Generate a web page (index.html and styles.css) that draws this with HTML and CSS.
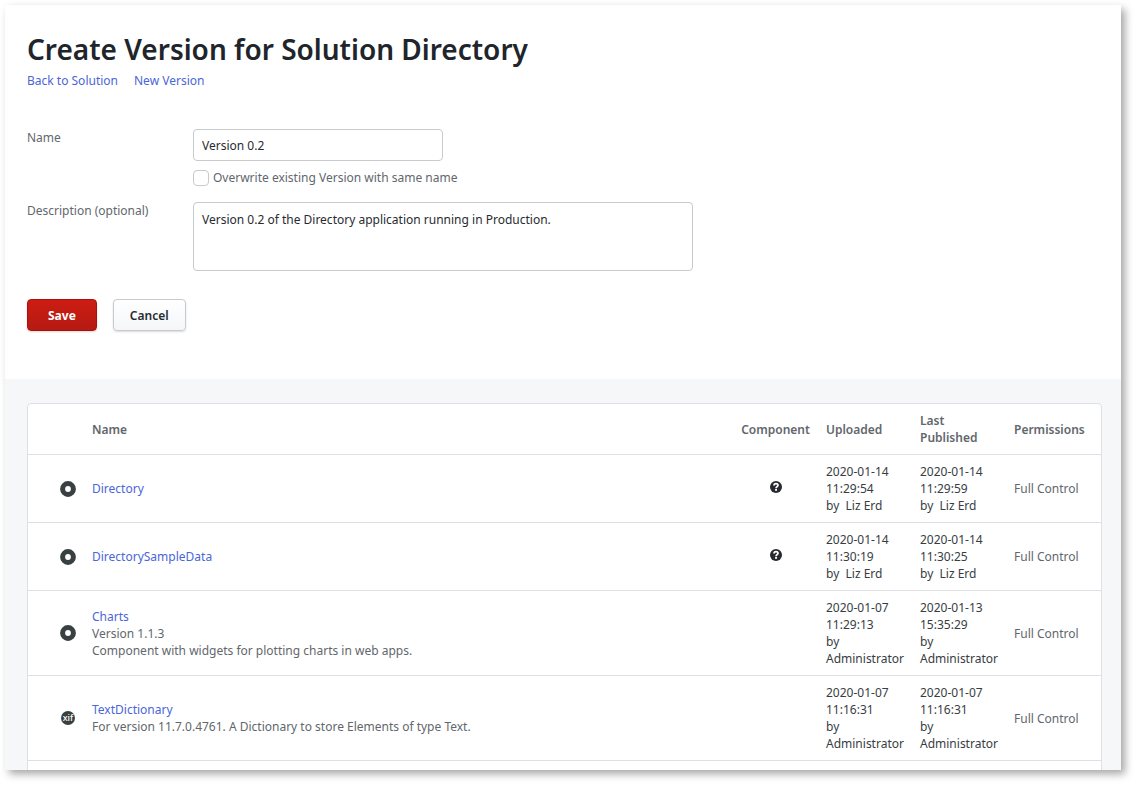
FILE: index.html
```
<!DOCTYPE html>
<html lang="en">
<head>
<meta charset="utf-8">
<title>Create Version for Solution Directory</title>
<link rel="stylesheet" href="styles.css">
</head>
<body>
<svg class="sprite" aria-hidden="true">
  <symbol id="icon-module" viewBox="0 0 16 16">
    <circle cx="8" cy="8" r="5.4" fill="none" stroke="#384042" stroke-width="5"/>
  </symbol>
  <symbol id="icon-help" viewBox="0 0 12 12">
    <circle cx="6" cy="6" r="6" fill="#272b30"/>
    <path d="M4 4.6C4 1.9 8 2 8 4.3C8 5.7 6.1 5.6 6.1 7.2" fill="none" stroke="#fff" stroke-width="1.8"/>
    <rect x="5.1" y="8" width="1.9" height="1.8" fill="#fff"/>
  </symbol>
</svg>
<main class="window">
  <section class="editor">
    <h1 class="title">Create Version for Solution Directory</h1>
    <nav class="links">
      <a href="#">Back to Solution</a>
      <a href="#">New Version</a>
    </nav>
    <form class="form">
      <div class="field">
        <label class="field-label" for="name">Name</label>
        <div class="field-body">
          <input class="text-input" id="name" type="text" value="Version 0.2">
          <div class="check">
            <input class="checkbox" id="overwrite" type="checkbox">
            <label for="overwrite">Overwrite existing Version with same name</label>
          </div>
        </div>
      </div>
      <div class="field">
        <label class="field-label" for="description">Description (optional)</label>
        <div class="field-body">
          <textarea class="text-area" id="description">Version 0.2 of the Directory application running in Production.</textarea>
        </div>
      </div>
      <div class="actions">
        <button class="button primary" type="button">Save</button>
        <button class="button" type="button">Cancel</button>
      </div>
    </form>
  </section>
  <section class="listing">
    <table class="modules">
      <thead>
        <tr>
          <th class="col-icon"></th>
          <th>Name</th>
          <th class="col-component">Component</th>
          <th class="col-date">Uploaded</th>
          <th class="col-date">Last Published</th>
          <th class="col-permissions">Permissions</th>
        </tr>
      </thead>
      <tbody>
        <tr>
          <td class="col-icon"><svg class="module-icon"><use href="#icon-module"/></svg></td>
          <td><a href="#">Directory</a></td>
          <td class="col-component"><svg class="help-icon"><use href="#icon-help"/></svg></td>
          <td class="date">2020-01-14 11:29:54<br>by &nbsp;Liz Erd</td>
          <td class="date">2020-01-14 11:29:59<br>by &nbsp;Liz Erd</td>
          <td>Full Control</td>
        </tr>
        <tr>
          <td class="col-icon"><svg class="module-icon"><use href="#icon-module"/></svg></td>
          <td><a href="#">DirectorySampleData</a></td>
          <td class="col-component"><svg class="help-icon"><use href="#icon-help"/></svg></td>
          <td class="date">2020-01-14 11:30:19<br>by &nbsp;Liz Erd</td>
          <td class="date">2020-01-14 11:30:25<br>by &nbsp;Liz Erd</td>
          <td>Full Control</td>
        </tr>
        <tr>
          <td class="col-icon"><svg class="module-icon"><use href="#icon-module"/></svg></td>
          <td><a href="#">Charts</a><br>Version 1.1.3<br>Component with widgets for plotting charts in web apps.</td>
          <td></td>
          <td class="date">2020-01-07 11:29:13<br>by Administrator</td>
          <td class="date">2020-01-13 15:35:29<br>by Administrator</td>
          <td>Full Control</td>
        </tr>
        <tr>
          <td class="col-icon"><span class="xif-icon">xif</span></td>
          <td><a href="#">TextDictionary</a><br>For version 11.7.0.4761. A Dictionary to store Elements of type Text.</td>
          <td></td>
          <td class="date">2020-01-07 11:16:31<br>by Administrator</td>
          <td class="date">2020-01-07 11:16:31<br>by Administrator</td>
          <td>Full Control</td>
        </tr>
        <tr class="next-row"><td></td><td></td><td></td><td></td><td></td><td></td></tr>
      </tbody>
    </table>
  </section>
</main>
</body>
</html>
```
FILE: styles.css
```
* { box-sizing: border-box; }

body {
  margin: 0;
  height: 100vh;
  padding: 5px 15px 15px 5px;
  background: #fff;
  color: #62676c;
  font: 12px/17px "Noto Sans", "Open Sans", sans-serif;
  overflow: hidden;
}

a { color: #4a66d8; text-decoration: none; }

.sprite { display: none; }

.window {
  display: flex;
  flex-direction: column;
  height: 100%;
  overflow: hidden;
  background: #fff;
  box-shadow: 4px 4px 8px rgba(0, 0, 0, 0.35);
}

.editor { flex: none; padding: 25px 22px 48px; }

.title {
  margin: 0;
  color: #20252b;
  font-size: 28px;
  line-height: 38px;
  font-weight: 600;
}

.links { display: flex; gap: 16px; margin-top: 4px; }

.form {
  display: flex;
  flex-direction: column;
  gap: 16px;
  margin-top: 40px;
}

.field { display: flex; }
.field-label { flex: none; width: 166px; }
.field-body { flex: 1; }

.text-input,
.text-area {
  display: block;
  padding: 8px;
  border: 1px solid #c9cacd;
  border-radius: 4px;
  background: #fff;
  color: #272b30;
  font: inherit;
}

.text-input { width: 250px; height: 32px; }
.text-area { width: 500px; max-width: 100%; height: 69px; resize: none; }

.check { display: flex; align-items: center; gap: 4px; margin-top: 8px; }

.checkbox {
  appearance: none;
  width: 16px;
  height: 16px;
  margin: 0;
  border: 1px solid #c9cacd;
  border-radius: 4px;
  background: #fff;
}

.actions { display: flex; gap: 16px; margin-top: 12px; }

.button {
  height: 32px;
  padding: 0 16px;
  border: 1px solid #c9cacd;
  border-radius: 4px;
  background: linear-gradient(#fff, #f4f6f8);
  box-shadow: 0 1px 2px rgba(0, 0, 0, 0.15);
  color: #272b30;
  font: inherit;
  font-weight: 600;
}

.primary {
  padding: 0 20px;
  border-color: #ac1009;
  background: linear-gradient(#cc1d13, #b51a12);
  color: #fff;
  font-weight: 700;
}

.listing { flex: 1; min-height: 0; padding: 24px 19px 0 22px; background: #f6f7f9; }

.modules {
  width: 100%;
  border: 1px solid #dee0e3;
  border-radius: 4px;
  border-spacing: 0;
  background: #fff;
}

.modules th,
.modules td {
  padding: 8px;
  border-bottom: 1px solid #dee0e3;
  text-align: left;
  vertical-align: middle;
}

.modules th { font-weight: 600; }
.modules .date { color: #383d43; }
.modules .col-icon { width: 56px; padding-left: 32px; }
.modules .col-component { width: 85px; text-align: center; }
.modules .col-date { width: 94px; }
.modules .col-permissions { width: 95px; }

.module-icon { display: block; width: 16px; height: 16px; }
.help-icon { width: 12px; height: 12px; }

.xif-icon {
  display: flex;
  align-items: center;
  justify-content: center;
  width: 14px;
  height: 14px;
  margin: 0 1px;
  border-radius: 50%;
  background: #384042;
  color: #fff;
  font-size: 9px;
  line-height: 14px;
  font-weight: 500;
}

.next-row { height: 68px; }
```
